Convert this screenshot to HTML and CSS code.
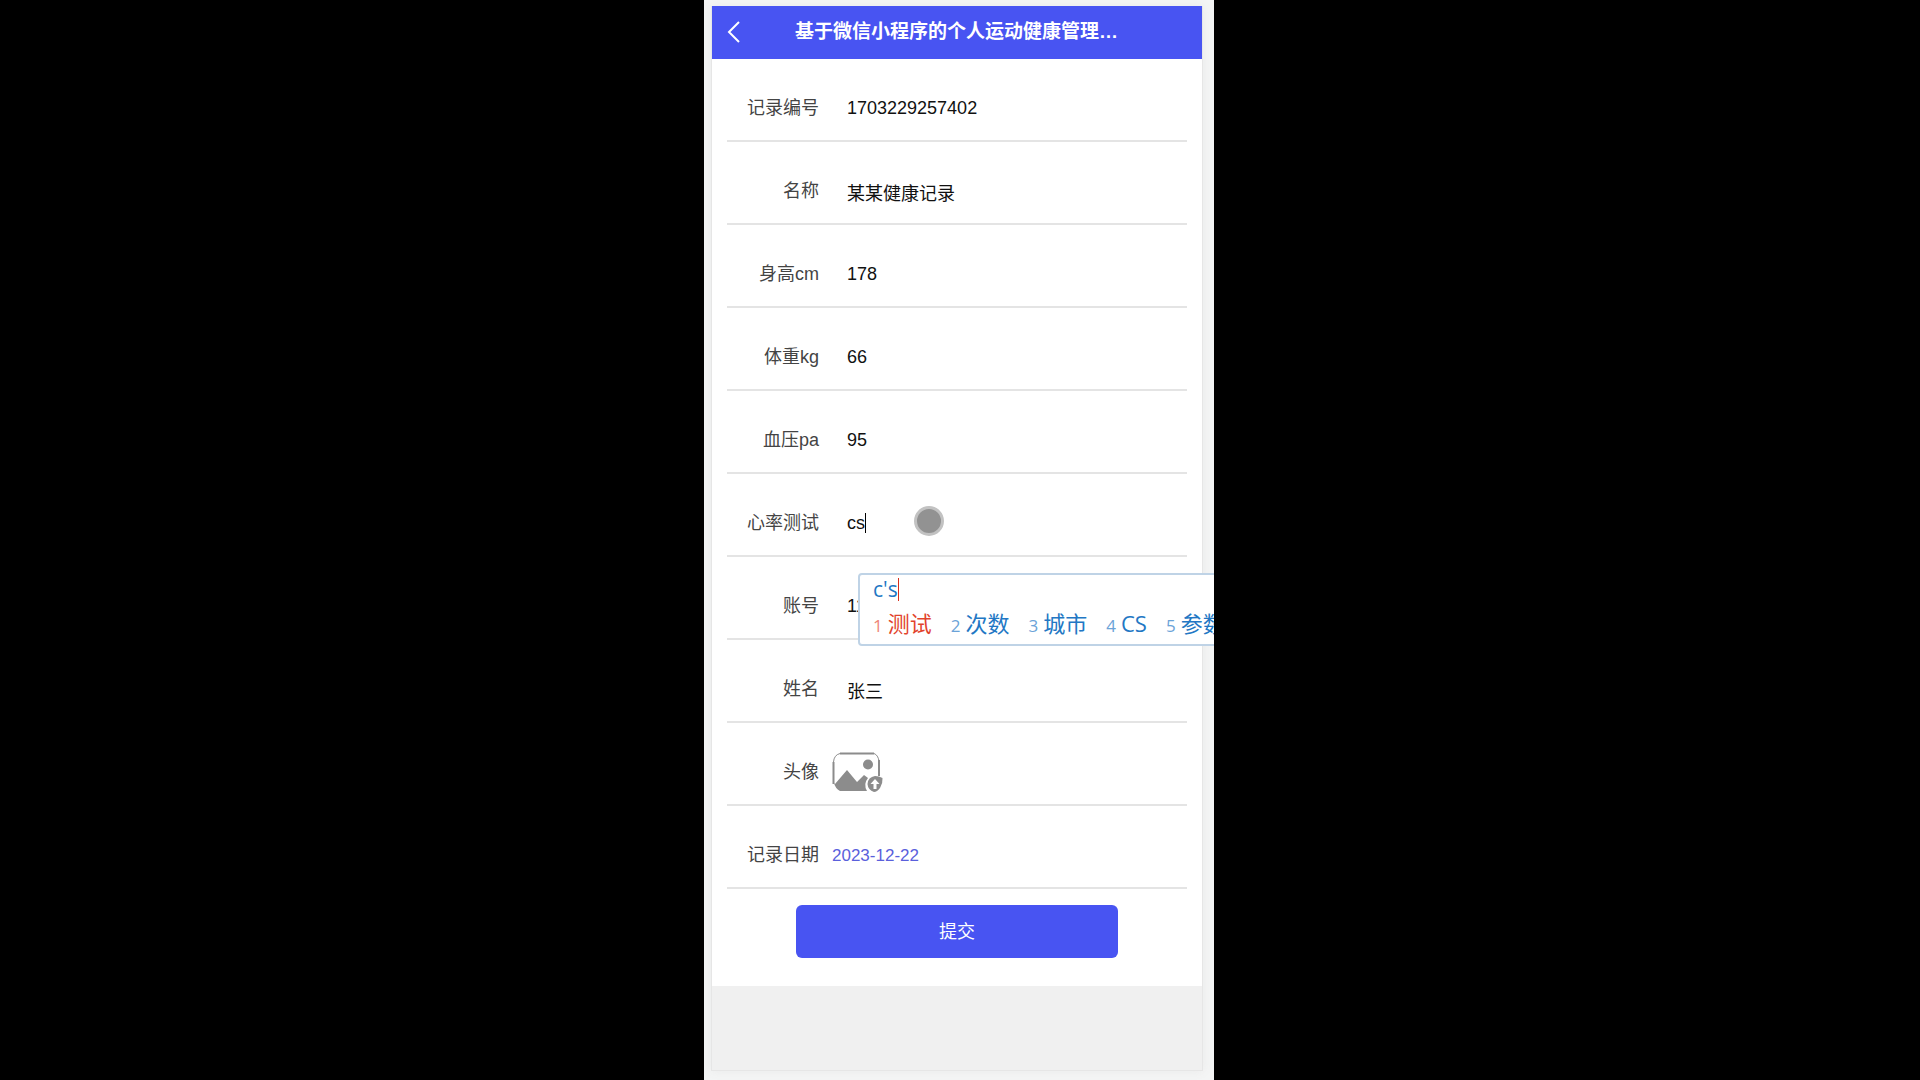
FILE: index.html
```html
<!DOCTYPE html>
<html lang="zh-CN">
<head>
<meta charset="utf-8">
<title>健康记录</title>
<link rel="stylesheet" href="styles.css">
</head>
<body>

<div class="stage">
  <div class="phone">
    <header class="navbar">
      <button type="button" class="back" aria-label="返回">
        <svg width="14" height="24" viewBox="0 0 14 24"><path d="M12 2L2 12L12 22" fill="none" stroke="#fff" stroke-width="2"/></svg>
      </button>
      <h1>基于微信小程序的个人运动健康管理…</h1>
    </header>

    <form class="record" action="#">
      <div class="row">
        <label for="recordNo">记录编号</label>
        <input type="text" id="recordNo" name="recordNo" value="1703229257402">
      </div>
      <div class="row">
        <label for="title">名称</label>
        <input type="text" id="title" name="title" value="某某健康记录">
      </div>
      <div class="row">
        <label for="height">身高cm</label>
        <input type="text" id="height" name="height" value="178">
      </div>
      <div class="row">
        <label for="weight">体重kg</label>
        <input type="text" id="weight" name="weight" value="66">
      </div>
      <div class="row">
        <label for="pressure">血压pa</label>
        <input type="text" id="pressure" name="pressure" value="95">
      </div>
      <div class="row">
        <label for="heart">心率测试</label>
        <input type="text" id="heart" name="heart" value="cs">
        <span class="caret"></span>
        <span class="touch"></span>
        <!-- input method candidates -->
        <div class="ime">
          <div class="typed">c's</div>
          <ol class="words">
            <li class="current"><small>1</small>测试</li>
            <li><small>2</small>次数</li>
            <li><small>3</small>城市</li>
            <li><small>4</small>CS</li>
            <li><small>5</small>参数</li>
          </ol>
        </div>
      </div>
      <div class="row">
        <label for="account">账号</label>
        <input type="text" id="account" name="account" value="11">
      </div>
      <div class="row">
        <label for="username">姓名</label>
        <input type="text" id="username" name="username" value="张三">
      </div>
      <div class="row">
        <label for="avatar">头像</label>
        <button type="button" id="avatar" class="upload" aria-label="上传头像">
          <svg width="51" height="40" viewBox="0 0 51 40">
            <path d="M1.5 32V10M8 1.5H42M47 8V24" fill="none" stroke="#8c8c8c" stroke-width="2"/>
            <path d="M1.5 10Q2 3 8 1.5M42 1.5Q46 3 47 9" fill="none" stroke="#8c8c8c"/>
            <path d="M2 31L3 32L15 18L25 30L32 23L36 26Q31 32 35 39H8Q3 36 2 31Z" fill="#8c8c8c"/>
            <circle cx="36" cy="12.5" r="5" fill="#8c8c8c"/>
            <path d="M43 24Q47 24 50.5 26Q51 31 48 36Q45 40 42 40Q36 38 35.500 32Q36 25 43 24Z" fill="#8c8c8c"/>
            <path d="M43 37V29" fill="none" stroke="#fff" stroke-width="3"/>
            <path d="M38.5 32L43 27L47.5 32Z" fill="#fff"/>
          </svg>
        </button>
      </div>
      <div class="row">
        <label for="date">记录日期</label>
        <input type="text" id="date" name="date" class="date" value="2023-12-22" readonly>
      </div>
      <button type="submit" class="submit">提交</button>
    </form>
  </div>
</div>

</body>
</html>
```
FILE: styles.css
```css
* {
  box-sizing: border-box;
}

body {
  margin: 0;
  padding-right: 2px;
  background: #000;
  font-family: "Liberation Sans", Arial, "Noto Sans CJK SC", sans-serif;
  font-size: 18px;
}

button, input {
  font: inherit;
  border: none;
  padding: 0;
  background: none;
}

input {
  outline: none;
}

svg {
  display: block;
}

.stage {
  display: flex;
  max-width: 510px;
  min-height: 100vh;
  margin: 0 auto;
  padding: 6px 11px 9px 7px;
  background: #f4f5f5;
  overflow: hidden;
}

.phone {
  flex: 1;
  min-width: 0;
  background: #f0f0f0;
  border: 1px solid #e6e6e6;
  border-top: none;
  box-shadow: 0 0 10px #e9e9e9;
}

.navbar {
  display: flex;
  align-items: center;
  height: 53px;
  padding: 0 15px 2px;
  background: #4854f2;
  color: #fff;
}

.navbar h1 {
  flex: 1;
  margin: 0 16px 0 0;
  font-size: 19px;
  line-height: 28px;
  text-align: center;
  white-space: nowrap;
}

.back {
  width: 15px;
}

.record {
  padding: 0 15px 28px;
  background: #fff;
}

.row {
  position: relative;
  display: flex;
  align-items: center;
  gap: 13px;
  height: 83px;
  padding-top: 16px;
  border-bottom: 2px solid #e4e4e4;
}

.row label {
  width: 92px;
  padding-bottom: 3px;
  color: #444;
  text-align: right;
}

.row input {
  flex: 1;
  min-width: 0;
  height: 40px;
  padding: 2px 0 0 15px;
  color: #111;
}

.row .date {
  padding-left: 0;
  font-size: 17px;
  color: #5a60dc;
}

.caret {
  position: absolute;
  left: 138px;
  top: 39px;
  width: 1px;
  height: 20px;
  background: #000;
}

.touch {
  position: absolute;
  left: 187px;
  top: 32px;
  width: 30px;
  height: 30px;
  border: 3px solid #c2c2c2;
  border-radius: 50%;
  background: #929292;
}

.ime {
  position: absolute;
  z-index: 1;
  left: 131px;
  top: 99px;
  width: max-content;
  height: 73px;
  padding: 3px 13px;
  border: 2px solid #bfd3e6;
  border-radius: 4px;
  background: #fff;
  color: #2277c4;
  font-family: "Open Sans", "Noto Sans CJK SC", sans-serif;
  font-size: 22px;
}

.typed {
  width: max-content;
  height: 23px;
  font-size: 21px;
  line-height: 23px;
  border-right: 1px solid #d8301c;
}

.words {
  display: flex;
  gap: 19px;
  margin: 0;
  padding: 5px 0 0;
  list-style: none;
  line-height: 34px;
}

.words li {
  display: flex;
  align-items: baseline;
  gap: 5px;
}

.words small {
  font-size: 17px;
  color: #6ba3d8;
}

.words .current {
  color: #e2432c;
}

.words .current small {
  color: #ee8577;
}

.upload {
  height: 40px;
}

.submit {
  display: block;
  width: 70%;
  height: 53px;
  margin: 16px auto 0;
  padding-bottom: 3px;
  border-radius: 6px;
  background: #4854f2;
  color: #fff;
}
```
